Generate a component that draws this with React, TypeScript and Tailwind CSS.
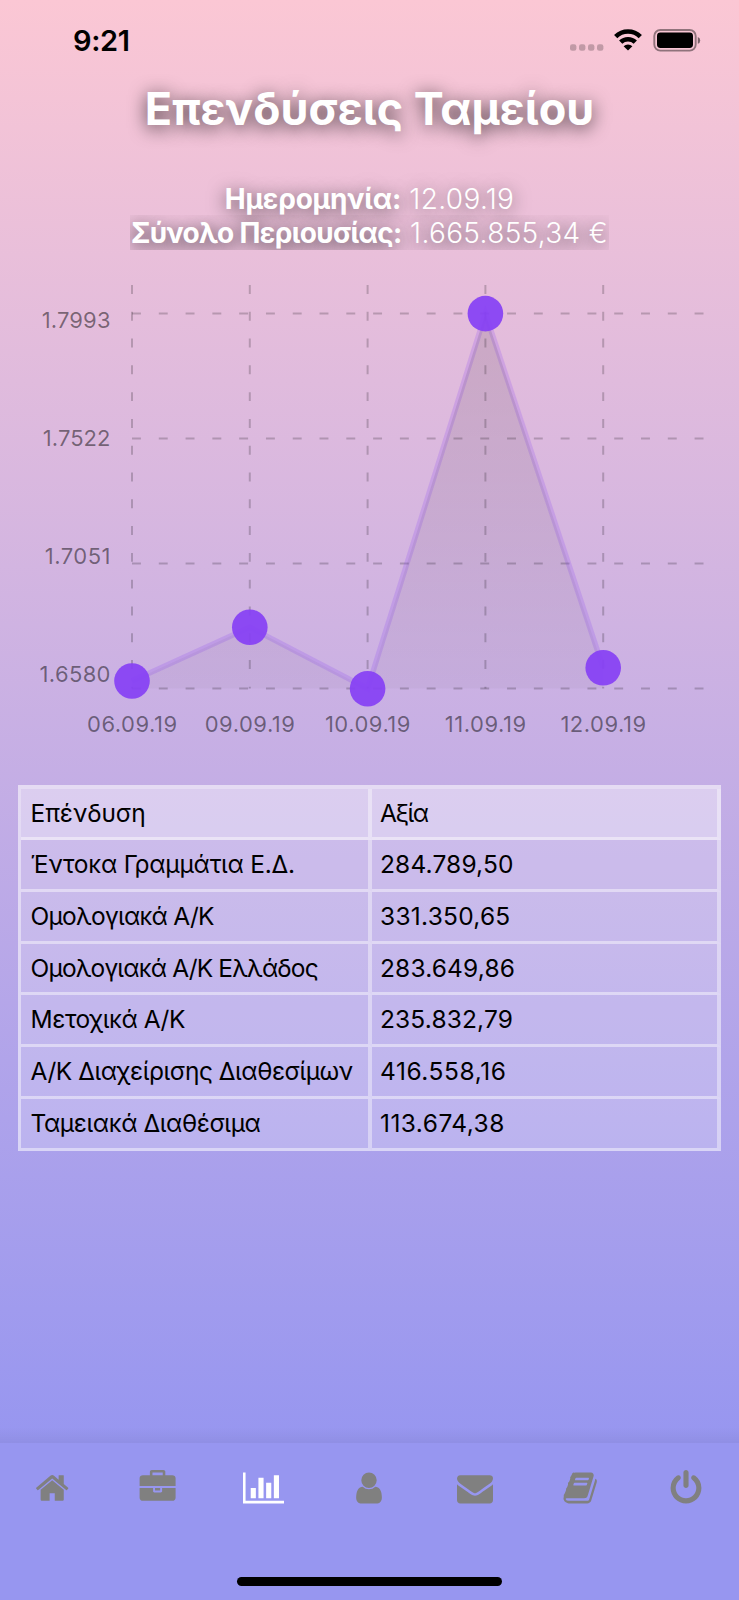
const BAR_ICONS = [
  { name: "home", x: 40, w: 1792, d: "M1472 992v480q0 26-19 45t-45 19h-384v-384h-256v384h-384q-26 0-45-19t-19-45v-480q0-1 .5-3t.5-3l575-474 575 474q1 2 1 6zm223-69l-62 74q-8 9-21 11h-3q-13 0-21-7l-692-577-692 577q-12 8-24 7-13-2-21-11l-62-74q-8-10-7-23.5t11-21.5l719-599q32-26 76-26t76 26l244 204v-195q0-14 9-23t23-9h192q14 0 23 9t9 23v408l219 182q10 8 11 21.5t-7 23.5z" },
  { name: "briefcase", x: 20, w: 1792, d: "M640 256h512v-128h-512v128zm1152 640v480q0 66-47 113t-113 47h-1472q-66 0-113-47t-47-113v-480h672v160q0 26 19 45t45 19h320q26 0 45-19t19-45v-160h672zm-768 0v128h-256v-128h256zm768-480v384h-1792v-384q0-66 47-113t113-47h352v-160q0-40 28-68t68-28h576q40 0 68 28t28 68v160h352q66 0 113 47t47 113z" },
  { name: "chart", x: 0, w: 2048, active: true, d: "M640 896v512h-256v-512h256zm384-512v1024h-256v-1024h256zm1024 1152v128h-2048v-1536h128v1408h1920zm-640-896v768h-256v-768h256zm384-384v1152h-256v-1152h256z" },
  { name: "user", x: 0, w: 1792, d: "M1536 1399q0 109-62.5 187t-150.5 78h-854q-88 0-150.5-78t-62.5-187q0-85 8.5-160.5t31.5-152 58.5-131 94-89 134.5-34.5q131 128 313 128t313-128q76 0 134.5 34.5t94 89 58.5 131 31.5 152 8.5 160.5zm-256-887q0 159-112.5 271.5t-271.5 112.5-271.5-112.5-112.5-271.5 112.5-271.5 271.5-112.5 271.5 112.5 112.5 271.5z" },
  { name: "mail", x: 0, w: 1792, d: "M1792 710v794q0 66-47 113t-113 47h-1472q-66 0-113-47t-47-113v-794q44 49 101 87 362 246 497 345 57 42 92.5 65.5t94.5 48 110 24.5h2q51 0 110-24.5t94.5-48 92.5-65.5q170-123 498-345 57-39 100-87zm0-294q0 79-49 151t-122 123q-376 261-468 325-10 7-42.5 31t-54 38.5-52 32.5-57.5 27-50 9h-2q-23 0-50-9t-57.5-27-52-32.5-54-38.5-42.5-31q-91-64-262-182.5t-205-142.5q-62-42-117-115.5t-55-136.5q0-78 41.5-130t118.5-52h1472q65 0 112.5 47t47.5 113z" },
  { name: "book", x: 40, w: 1792, d: "M1703 478q40 57 18 129l-275 906q-19 64-76.5 107.5t-122.5 43.5h-923q-77 0-148.5-53.5t-99.5-131.5q-24-67-2-127 0-4 3-27t4-37q1-8-3-21.5t-3-19.5q2-11 8-21t16.5-23.5 16.5-23.5q23-38 45-91.5t30-91.5q3-10 .5-30t-.5-28q3-11 17-28t17-23q21-36 42-92t25-90q1-9-2.5-32t.5-28q4-13 22-30.5t22-22.5q19-26 42.5-84.5t27.5-96.5q1-8-3-25.5t-2-26.5q2-8 9-18t18-23 17-21q8-12 16.5-30.5t15-35 16-36 19.5-32 26.5-23.5 36-11.5 47.5 5.5l-1 3q38-9 51-9h761q74 0 114 56t18 130l-274 906q-36 119-71.5 153.5t-128.5 34.5h-869q-27 0-38 15-11 16-1 43 24 70 144 70h923q29 0 56-15.5t35-41.5l300-987q7-22 5-57 38 15 59 43zm-1064 2q-4 13 2 22.5t20 9.5h608q13 0 25.5-9.5t16.5-22.5l21-64q4-13-2-22.5t-20-9.5h-608q-13 0-25.5 9.5t-16.5 22.5zm-83 256q-4 13 2 22.5t20 9.5h608q13 0 25.5-9.5t16.5-22.5l21-64q4-13-2-22.5t-20-9.5h-608q-13 0-25.5 9.5t-16.5 22.5z" },
  { name: "power", x: 0, w: 1792, d: "M1664 896q0 156-61 298t-164 245-245 164-298 61-298-61-245-164-164-245-61-298q0-182 80.5-343t226.5-270q43-32 95.5-25t83.5 50q32 42 24.5 94.5t-49.5 84.5q-98 74-151.5 181t-53.5 228q0 104 40.5 198.5t109.5 163.5 163.5 109.5 198.5 40.5 198.5-40.5 163.5-109.5 109.5-163.5 40.5-198.5q0-121-53.5-228t-151.5-181q-42-32-49.5-84.5t24.5-94.5q31-43 84-50t95 25q146 109 226.5 270t80.5 343zm-640-768v640q0 52-38 90t-90 38-90-38-38-90v-640q0-52 38-90t90-38 90 38 38 90z" },
];

const POINTS = [
  { x: 132, y: 681, label: "06.09.19" },
  { x: 249.8, y: 627.3, label: "09.09.19" },
  { x: 367.6, y: 688.7, label: "10.09.19" },
  { x: 485.4, y: 313.6, label: "11.09.19" },
  { x: 603.2, y: 667.8, label: "12.09.19" },
];

const LEVELS = [
  { y: 313.6, textY: 328, spacing: 0.15, label: "1.7993" },
  { y: 438.6, textY: 446, spacing: 0.05, label: "1.7522" },
  { y: 563.5, textY: 564, spacing: 0.5, label: "1.7051" },
  { y: 688.5, textY: 682, spacing: 0.35, label: "1.6580" },
];

const ROWS = [
  { name: "Επένδυση", nameClass: "tracking-[-0.1px]", value: "Αξία", valueClass: "tracking-[-1.5px]" },
  { name: "Έντοκα Γραμμάτια Ε.Δ.", nameClass: "tracking-[-0.2px]", value: "284.789,50", valueClass: "tracking-[0.15px]" },
  { name: "Ομολογιακά Α/Κ", nameClass: "tracking-[-0.75px]", value: "331.350,65", valueClass: "tracking-[0.25px]" },
  { name: "Ομολογιακά Α/Κ Ελλάδος", nameClass: "tracking-[-0.85px]", value: "283.649,86", valueClass: "tracking-[0.15px]" },
  { name: "Μετοχικά Α/Κ", nameClass: "tracking-[-0.45px]", value: "235.832,79", valueClass: "tracking-[0.15px]" },
  { name: "Α/Κ Διαχείρισης Διαθεσίμων", nameClass: "tracking-[-0.47px]", value: "416.558,16", valueClass: "tracking-[0.55px]" },
  { name: "Ταμειακά Διαθέσιμα", nameClass: "tracking-[-0.42px]", value: "113.674,38", valueClass: "tracking-[0.45px]" },
];

function StatusBar() {
  return (
    <div className="flex h-20 items-start justify-between pl-[73px] pr-[38px] pt-[23px]">
      <span className="text-[29px] leading-9 font-semibold tracking-[-0.4px] text-black">9:21</span>
      <svg className="mt-[3px]" width="132" height="30" viewBox="569 26 132 30">
        <g fill="#000" fillOpacity="0.22">
          <rect x="570" y="44.3" width="6.4" height="6.4" rx="2.2" />
          <rect x="579" y="44.3" width="6.4" height="6.4" rx="2.2" />
          <rect x="588" y="44.3" width="6.4" height="6.4" rx="2.2" />
          <rect x="597" y="44.3" width="6.4" height="6.4" rx="2.2" />
        </g>
        <g fill="none" stroke="#000" strokeWidth="4.6">
          <path d="M615.7 36.6a17.5 17.5 0 0 1 24.6 0" />
          <path d="M620.7 42.2a10.4 10.4 0 0 1 14.6 0" />
        </g>
        <path d="M628 50.6l-4.4-4.4a6.6 6.6 0 0 1 8.8 0z" />
        <rect x="654.3" y="30" width="41.4" height="20.6" rx="6" fill="none" stroke="#000" strokeOpacity="0.42" strokeWidth="1.9" />
        <rect x="657" y="32.6" width="36" height="15.4" rx="3.4" />
        <path d="M697.8 37v6.8q2.4-1 2.4-3.4t-2.4-3.4z" fillOpacity="0.5" />
      </svg>
    </div>
  );
}

function Chart() {
  const line = POINTS.map((p) => `${p.x},${p.y}`).join(" ");
  return (
    <svg className="block h-[500px] w-[739px]" viewBox="0 270 739 500">
      <defs>
        <linearGradient id="area" gradientUnits="userSpaceOnUse" x1="0" y1="313" x2="0" y2="689">
          <stop offset="0" stopOpacity="0.11" />
          <stop offset="1" stopOpacity="0.03" />
        </linearGradient>
      </defs>
      <g stroke="#000" strokeOpacity="0.2" strokeWidth="2" strokeDasharray="8.93 17.86">
        {LEVELS.map((l) => (
          <line key={l.label} x1="132" x2="704" y1={l.y} y2={l.y} />
        ))}
        {POINTS.map((p) => (
          <line key={p.label} x1={p.x} x2={p.x} y1="285" y2="688.5" />
        ))}
      </g>
      <polyline points={line} fill="none" stroke="#8641f4" strokeOpacity="0.2" strokeWidth="5.4" />
      <polygon points={`${line} 603.2,688.5 132,688.5`} fill="url(#area)" />
      {POINTS.map((p) => (
        <circle key={p.label} cx={p.x} cy={p.y} r="17.8" fill="#8641f4" fillOpacity="0.93" />
      ))}
      <g fill="#000" fillOpacity="0.48" fontSize="22">
        {LEVELS.map((l) => (
          <text key={l.label} x={110.5 + l.spacing} y={l.textY} letterSpacing={l.spacing} textAnchor="end">{l.label}</text>
        ))}
        {POINTS.map((p) => (
          <text key={p.label} x={p.x + 0.3} y="731.5" letterSpacing="0.5" textAnchor="middle">{p.label}</text>
        ))}
      </g>
    </svg>
  );
}

function HoldingsTable() {
  return (
    <div className="mx-[18px] mt-[15px] border-t-4 border-l-[3px] border-white/45 bg-white/20">
      {ROWS.map((row, i) => (
        <div key={row.name} className={i === 0 ? "flex h-[51px] bg-white/25" : "flex h-[51.8px]"}>
          <div className="flex w-[351px] items-center border-r-4 border-b-[3px] border-r-white/40 border-b-white/45 pl-[9.5px] text-[24.5px] whitespace-nowrap text-black">
            <span className={row.nameClass}>{row.name}</span>
          </div>
          <div className="flex flex-1 items-center border-r-4 border-b-[3px] border-r-white/40 border-b-white/45 pl-2 text-[24.5px] text-black">
            <span className={row.valueClass}>{row.value}</span>
          </div>
        </div>
      ))}
    </div>
  );
}

export default function App() {
  return (
    <div className="flex h-[1600px] w-[739px] flex-col overflow-hidden bg-[#9796f0] font-['Inter','Noto_Sans',sans-serif]">
      <div className="flex h-[1443px] flex-col bg-linear-to-b from-[#fbc7d4] to-[#9796f0]">
        <StatusBar />
        <h1 className="h-[100px] pt-0.5 text-center text-[45px] leading-[54px] font-bold text-white [text-shadow:0_3px_18px_rgb(0_0_0/0.75)]">
          Επενδύσεις Ταμείου
        </h1>
        <div className="flex h-[90px] flex-col items-center text-[28px] leading-[34px] font-[350] whitespace-nowrap text-white">
          <div className="mt-0.5 h-[33px] tracking-[0.35px] [text-shadow:0_3px_18px_rgb(0_0_0/0.65)]">
            <b className="font-bold tracking-[-0.2px]">Ημερομηνία:</b> 12.09.19
          </div>
          <div className="h-[35px] overflow-hidden px-px pt-px tracking-[0.35px] [text-shadow:0_4px_18px_rgb(0_0_0/0.8)]">
            <b className="font-bold tracking-[-0.65px]">Σύνολο Περιουσίας:</b> 1.665.855,34 €
          </div>
        </div>
        <Chart />
        <HoldingsTable />
        <div className="mt-auto h-4 bg-linear-to-b from-transparent to-black/5" />
      </div>
      <nav className="grid h-[135px] grid-cols-7 justify-items-center pt-[27px]">
        {BAR_ICONS.map((icon) => (
          <svg
            key={icon.name}
            viewBox={`${icon.x} 0 ${icon.w} 1792`}
            className={icon.active ? "h-9 w-[41.14px] fill-white" : "h-9 w-9 overflow-visible fill-[#808080]"}
          >
            <path d={icon.d} />
          </svg>
        ))}
      </nav>
      <div className="mx-auto mt-[-1px] h-[9px] w-[265px] rounded-full bg-black" />
    </div>
  );
}
